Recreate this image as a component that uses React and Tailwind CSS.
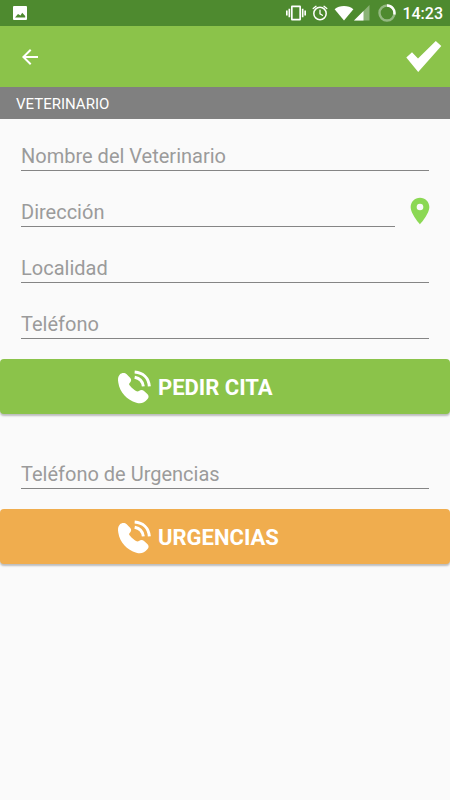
import React from 'react'
import { MdArrowBack, MdLocationOn, MdVibration } from 'react-icons/md'

function PictureIcon() {
  return (
    <svg viewBox="0 0 14 14" className="size-3.5" fill="currentColor" fillRule="evenodd">
      <path d="M1 0h12a1 1 0 0 1 1 1v12a1 1 0 0 1-1 1H1a1 1 0 0 1-1-1V1a1 1 0 0 1 1-1zM2 11.5h10.2V10L9.2 6.8L7.5 9.5L5 8z" />
    </svg>
  )
}

function AlarmIcon() {
  return (
    <svg viewBox="0 0 16 16" className="size-4" fill="none" stroke="currentColor" strokeLinecap="round">
      <circle cx="8" cy="8.5" r="6.2" strokeWidth="1.5" />
      <path d="M1.2 3.6L4 1.3M14.8 3.6L12 1.3M8 5.2v3.6l2.4 1.5" strokeWidth="1.3" />
    </svg>
  )
}

function WifiIcon() {
  return (
    <svg viewBox="0 0 20 16" className="h-4 w-5" fill="currentColor">
      <path d="M10 15.6L.6 4.2C5.5 0 14.5 0 19.4 4.2z" />
    </svg>
  )
}

function SignalIcon() {
  return (
    <svg viewBox="0 0 16 16" className="size-4" fill="currentColor">
      <path d="M15.5 0v15.5H0z" opacity="0.35" />
      <path d="M9.5 6v9.5H0z" />
    </svg>
  )
}

function BatteryIcon() {
  return (
    <svg viewBox="0 0 18 18" className="size-[18px]" fill="none" stroke="currentColor" strokeWidth="2.4">
      <circle cx="9" cy="9" r="7.5" opacity="0.4" />
      <path d="M9 1.5A7.5 7.5 0 0 1 16.3 10.5" />
    </svg>
  )
}

function CheckIcon() {
  return (
    <svg viewBox="0 0 36 32" className="h-8 w-9" fill="currentColor">
      <path d="M.3 16.5L6 11.3L12 17.6L29.8 0L35.3 5L12.2 31z" />
    </svg>
  )
}

function CallIcon() {
  return (
    <svg viewBox="-2 3 102 102" className="size-[34px] overflow-visible" fill="none" stroke="currentColor" strokeWidth="9">
      <path
        d="M6 14C12 8 22 8 27 13L38 24C42 29 41 34 36 39C33 42 34 44 37 47C43 54 49 59 55 63C58 65 61 65 64 63C69 59 75 59 80 64L89 72C94 77 94 83 89 88C80 99 69 102 56 98C28 90 6 66 2 38C0 27 1 19 6 14z"
        fill="currentColor"
        stroke="none"
      />
      <path d="M51 6C76 8 93 24 95 49M51 22C66 25 75 34 77 49" />
    </svg>
  )
}

function Field({ id, label, type = 'text' }) {
  return (
    <input
      id={id}
      type={type}
      aria-label={label}
      placeholder={label}
      className="h-[30px] w-full min-w-0 flex-1 rounded-none border-b border-[#858585] bg-transparent text-xl leading-6 text-gray-800 outline-none placeholder:text-[#9b9b9b]"
    />
  )
}

function CallButton({ color, children }) {
  return (
    <button
      type="button"
      className={`flex h-[55px] w-full items-center rounded-sm pt-0.5 pl-[26%] text-[22px] font-bold text-white shadow-[0_2px_2px_rgba(0,0,0,0.25)] ${color}`}
    >
      <CallIcon />
      <span className="ml-[7px]">{children}</span>
    </button>
  )
}

export default function App() {
  return (
    <div className="min-h-screen bg-[#fafafa] font-[Roboto,sans-serif]">
      <div className="flex h-[26px] items-center justify-between bg-[#4e8a2f] pr-[7px] pl-[13px] text-white">
        <PictureIcon />
        <div className="flex items-center">
          <MdVibration className="size-5" />
          <div className="ml-1.5 flex items-center">
            <AlarmIcon />
          </div>
          <div className="ml-1.5 flex items-center">
            <WifiIcon />
            <SignalIcon />
          </div>
          <div className="mr-1.5 ml-2 flex items-center">
            <BatteryIcon />
          </div>
          <span className="pt-0.5 text-base font-medium">14:23</span>
        </div>
      </div>

      <header className="flex h-[61px] items-center justify-between bg-[#8bc34a] pr-2 pl-[18px] text-white">
        <button type="button" aria-label="Volver">
          <MdArrowBack className="size-6" />
        </button>
        <button type="button" aria-label="Guardar">
          <CheckIcon />
        </button>
      </header>

      <h1 className="flex h-8 items-center bg-[#808080] px-4 pt-0.5 text-[15px] text-white">VETERINARIO</h1>

      <form>
        <div className="flex flex-col gap-[26px] px-[21px] pt-[22px] pb-5">
          <div className="flex">
            <Field id="nombre" label="Nombre del Veterinario" />
          </div>
          <div className="flex items-center gap-2">
            <Field id="direccion" label="Dirección" />
            <button type="button" aria-label="Ver en el mapa" className="-my-1 -mr-2 text-[#8bd854]">
              <MdLocationOn className="size-[34px] pb-0.5" />
            </button>
          </div>
          <div className="flex">
            <Field id="localidad" label="Localidad" />
          </div>
          <div className="flex">
            <Field id="telefono" label="Teléfono" type="tel" />
          </div>
        </div>
        <CallButton color="bg-[#8bc34a]">PEDIR CITA</CallButton>

        <div className="flex px-[21px] pt-[45px] pb-5">
          <Field id="urgencias" label="Teléfono de Urgencias" type="tel" />
        </div>
        <CallButton color="bg-[#f0ad4e]">URGENCIAS</CallButton>
      </form>
    </div>
  )
}
